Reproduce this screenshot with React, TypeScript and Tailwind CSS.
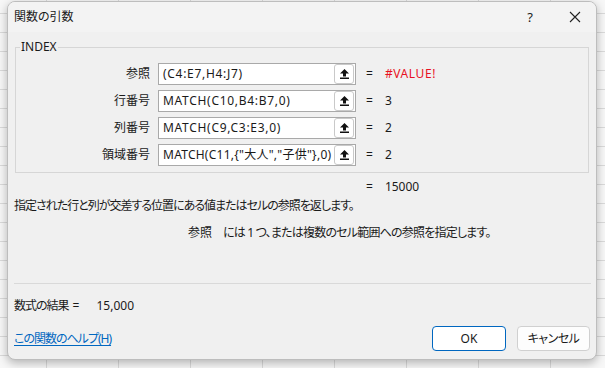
import React from "react";

const rows = [
  { label: "参照", value: "(C4:E7,H4:J7)", result: "#VALUE!", error: true, track: "tracking-[0.7px]" },
  { label: "行番号", value: "MATCH(C10,B4:B7,0)", result: "3", track: "tracking-[0.7px]" },
  { label: "列番号", value: "MATCH(C9,C3:E3,0)", result: "2", track: "tracking-[0.7px]" },
  { label: "領域番号", value: 'MATCH(C11,{"大人","子供"},0)', result: "2", track: "tracking-[0.25px]" },
];

function CollapseIcon() {
  return (
    <svg width="11" height="12" viewBox="0 0 11 12">
      <polygon points="5.5,1 10,5.5 7,5.5 7,8.5 4,8.5 4,5.5 1,5.5" fill="#111" />
      <rect x="1" y="9.5" width="9" height="1.5" fill="#111" />
    </svg>
  );
}

export default function App() {
  return (
    <div
      className="w-[605px] h-[368px] overflow-hidden bg-[#f7f7f7] [background-image:linear-gradient(to_right,#dadada_1px,transparent_1px),linear-gradient(to_bottom,#dadada_1px,transparent_1px)] [background-size:72px_19px] [background-position:46px_13px] pt-[1px] pl-[7px] text-[12px] leading-[16px] text-[#1a1a1a] [font-feature-settings:'palt']"
      style={{ fontFamily: '"Noto Sans", "Noto Sans CJK JP", sans-serif' }}
    >
      {/* Dialog */}
      <div className="w-[590px] h-[359px] rounded-lg bg-[#f0f0f0] border border-[#bdbdbd] shadow-[0_3px_10px_rgba(0,0,0,0.28)] overflow-hidden flex flex-col">
        {/* Title bar */}
        <div className="h-[30px] shrink-0 bg-[#f3f3f3] flex items-center pl-[6px] pr-[11px]">
          <span>関数の引数</span>
          <span className="ml-auto w-[20px] text-center text-[13px]">?</span>
          <span className="ml-[25px] w-[20px] flex justify-center">
            <svg width="12" height="12" viewBox="0 0 12 12">
              <path d="M1 1 L11 11 M11 1 L1 11" stroke="#222" strokeWidth="1.1" />
            </svg>
          </span>
        </div>

        <div className="flex-1 flex flex-col pl-[6px] pr-[6px]">
          {/* Group box */}
          <div className="relative mt-[15px] ml-[1px] mr-[1px] h-[126px] border border-[#d6d6d6] pt-[15px]">
            <span className="absolute left-[4px] top-[-9px] bg-[#f0f0f0] px-[1px]">INDEX</span>
            <div className="flex flex-col gap-[5px]">
              {rows.map((r) => (
                <div key={r.label} className="flex items-center h-[22px]">
                  <span className="w-[134px] text-right">{r.label}</span>
                  <div className="ml-[8px] w-[198px] h-[22px] bg-white border border-[#a9a9a9] flex items-center">
                    <span className={"flex-1 pl-[4px] overflow-hidden whitespace-nowrap " + r.track}>{r.value}</span>
                    <span className="w-[20px] h-[20px] mr-[1px] shrink-0 rounded-[3px] border border-[#c9c9c9] bg-white flex items-center justify-center">
                      <CollapseIcon />
                    </span>
                  </div>
                  <span className="ml-[10px]">=</span>
                  <span className={"ml-[12px] tracking-[0.6px] " + (r.error ? "text-[#e81123]" : "")}>{r.result}</span>
                </div>
              ))}
            </div>
          </div>

          {/* Overall value */}
          <div className="mt-[6px] ml-[352px] flex">
            <span>=</span>
            <span className="ml-[12px]">15000</span>
          </div>

          {/* Description */}
          <p className="mt-[3px] tracking-[-1px]">指定された行と列が交差する位置にある値またはセルの参照を返します。</p>
          <div className="mt-[11px] ml-[174px] flex">
            <span>参照</span>
            <span className="ml-[11px] tracking-[-0.8px]">には 1 つ、または複数のセル範囲への参照を指定します。</span>
          </div>

          {/* Separator */}
          <div className="mt-[42px] mr-[-1px] border-t border-[#d9d9d9]" />

          <div className="mt-[14px] flex">
            <span className="tracking-[-1px]">数式の結果</span>
            <span className="ml-[4px]">=</span>
            <span className="ml-[17px]">15,000</span>
          </div>

          {/* Footer */}
          <div className="mt-[12px] flex items-center">
            <a className="text-[#0067c0] underline underline-offset-2 cursor-pointer tracking-[-1px]">この関数のヘルプ(H)</a>
            <button className="ml-auto w-[74px] h-[25px] rounded-[4px] bg-white border border-[#0067c0] text-[#1a1a1a]">
              OK
            </button>
            <button className="ml-[11px] w-[73px] h-[25px] rounded-[4px] bg-[#fdfdfd] border border-[#d0d0d0] text-[#1a1a1a] tracking-[-0.5px]">
              キャンセル
            </button>
          </div>
        </div>
      </div>
    </div>
  );
}
